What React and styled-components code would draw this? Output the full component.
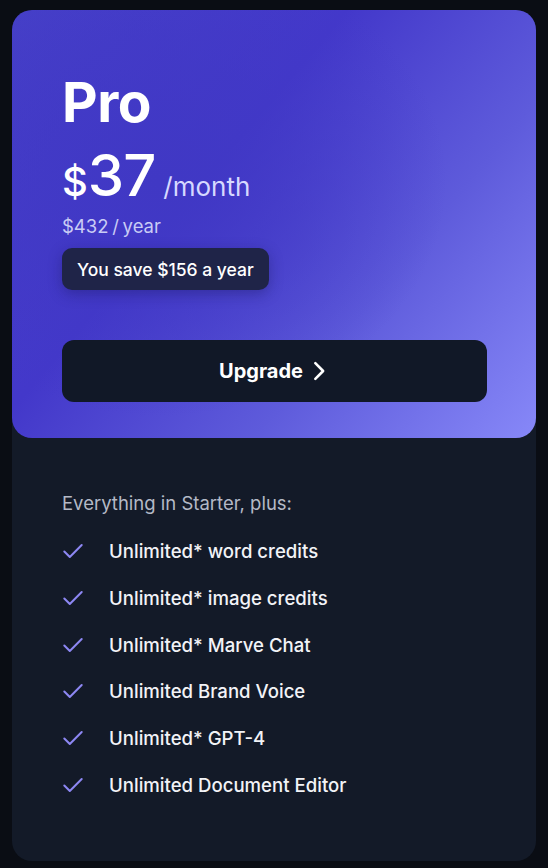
import React from "react";
import styled, { createGlobalStyle } from "styled-components";

const GlobalStyle = createGlobalStyle`
  html, body {
    margin: 0;
    padding: 0;
    background: #0a0d14;
  }
  body {
    font-family: Inter, "Noto Sans", sans-serif;
    -webkit-font-smoothing: antialiased;
  }
`;

const features = [
  "Unlimited* word credits",
  "Unlimited* image credits",
  "Unlimited* Marve Chat",
  "Unlimited Brand Voice",
  "Unlimited* GPT-4",
  "Unlimited Document Editor",
];

const App = () => {
  return (
    <>
      <GlobalStyle />
      <Page>
        <Card>
          <Header>
            <Title>Pro</Title>
            <PriceRow>
              <Currency>$</Currency>
              <Amount>37</Amount>
              <Period>/month</Period>
            </PriceRow>
            <Yearly>$432 / year</Yearly>
            <Badge>You save $156 a year</Badge>
            <UpgradeButton>
              Upgrade
              <svg width="22" height="22" viewBox="0 0 24 24" fill="none">
                <path
                  d="M8 3.5 L16.5 12 L8 20.5"
                  stroke="#fff"
                  strokeWidth="2.8"
                  strokeLinecap="round"
                  strokeLinejoin="round"
                />
              </svg>
            </UpgradeButton>
          </Header>
          <Body>
            <Intro>Everything in Starter, plus:</Intro>
            <List>
              {features.map((f) => (
                <Item key={f}>
                  <Check viewBox="0 0 24 24" fill="none">
                    <path
                      d="M2.5 12.5 L8.5 18.5 L21.5 5.5"
                      stroke="#8d87f3"
                      strokeWidth="2.2"
                      strokeLinecap="round"
                      strokeLinejoin="round"
                    />
                  </Check>
                  <span>{f}</span>
                </Item>
              ))}
            </List>
          </Body>
        </Card>
      </Page>
    </>
  );
};

export default App;

const Page = styled.div`
  padding: 10px 12px 7px;
`;
const Card = styled.div`
  background: #131a28;
  border-radius: 20px;
  height: 851px;
  display: flex;
  flex-direction: column;
`;
const Header = styled.div`
  border-radius: 20px;
  height: 428px;
  box-sizing: border-box;
  padding: 66px 50px 0;
  background: radial-gradient(
      ellipse 55% 55% at 28% 40%,
      rgba(64, 56, 196, 1) 0%,
      rgba(64, 56, 196, 0) 100%
    ),
    linear-gradient(130deg, #4640c8 0%, #4338ca 38%, #5e5bdb 68%, #8788f8 100%);
  display: flex;
  flex-direction: column;
  align-items: flex-start;
`;
const Title = styled.h1`
  margin: 0;
  color: #fff;
  font-size: 55px;
  font-weight: 700;
  line-height: 52px;
  letter-spacing: -0.5px;
`;
const PriceRow = styled.div`
  display: flex;
  align-items: baseline;
  margin-top: 18px;
  color: #fff;
`;
const Currency = styled.span`
  font-size: 40px;
  font-weight: 500;
`;
const Amount = styled.span`
  font-size: 58px;
  font-weight: 500;
  line-height: 58px;
  letter-spacing: -1px;
`;
const Period = styled.span`
  font-size: 26px;
  color: #d6d9ff;
  margin-left: 8px;
`;
const Yearly = styled.div`
  margin-top: 9px;
  font-size: 18.5px;
  color: #c9ccf5;
  word-spacing: -1.5px;
`;
const Badge = styled.div`
  margin-top: 11px;
  background: #1f2448;
  color: #fff;
  font-size: 17.5px;
  font-weight: 500;
  border-radius: 10px;
  padding: 0 15px;
  height: 42px;
  display: flex;
  align-items: center;
  box-shadow: 0 4px 14px rgba(20, 20, 80, 0.35);
`;
const UpgradeButton = styled.button`
  margin-top: 50px;
  width: 425px;
  height: 62px;
  border: none;
  border-radius: 12px;
  background: #111827;
  color: #fff;
  font-family: Inter, sans-serif;
  font-size: 20px;
  font-weight: 700;
  display: flex;
  align-items: center;
  justify-content: center;
  gap: 5px;
  cursor: pointer;
`;
const Body = styled.div`
  padding: 54px 50px 0;
`;
const Intro = styled.p`
  margin: 0;
  color: #b4b9c6;
  font-size: 18.5px;
`;
const List = styled.ul`
  list-style: none;
  margin: 26px 0 0;
  padding: 0;
  display: flex;
  flex-direction: column;
  gap: 24.8px;
`;
const Item = styled.li`
  display: flex;
  align-items: center;
  gap: 25px;
  color: #f2f3f7;
  font-size: 18.6px;
  font-weight: 500;
  line-height: 22px;
`;
const Check = styled.svg`
  width: 22px;
  height: 22px;
  flex-shrink: 0;
`;
